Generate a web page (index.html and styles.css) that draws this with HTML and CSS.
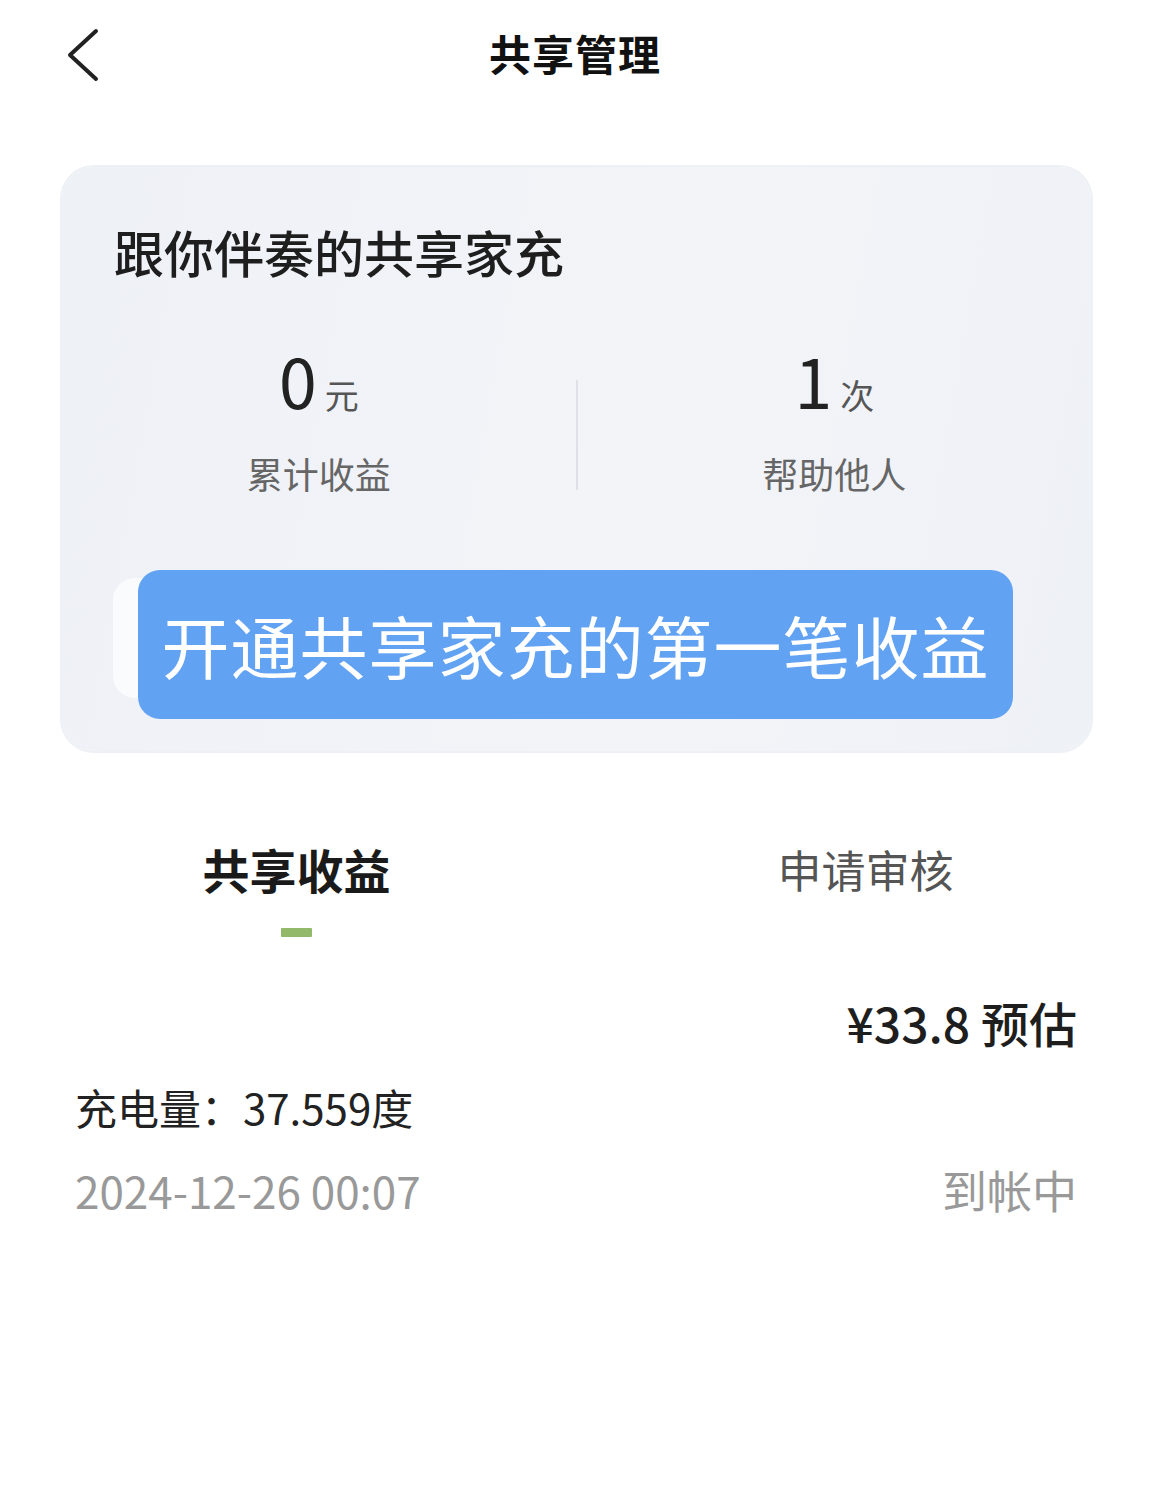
FILE: index.html
```html
<!DOCTYPE html>
<html lang="zh-CN">

<head>
    <meta charset="UTF-8">
    <meta name="viewport" content="width=device-width, initial-scale=1.0">
    <title>共享管理</title>
    <link rel="stylesheet" href="styles.css">
</head>

<body>
    <!-- 顶部导航 -->
    <div class="nav">
        <span class="back">
            <svg width="40" height="56" viewBox="0 0 40 56">
                <polyline points="32,4 6,28 32,52" fill="none" stroke="#222" stroke-width="4" stroke-linecap="round" stroke-linejoin="round" />
            </svg>
        </span>
        <h1 class="nav-title">共享管理</h1>
    </div>

    <!-- 收益卡片 -->
    <div class="card">
        <div class="card-title">跟你伴奏的共享家充</div>
        <div class="stats">
            <div class="stat">
                <div class="stat-value">0<span class="unit">元</span></div>
                <div class="stat-label">累计收益</div>
            </div>
            <div class="divider"></div>
            <div class="stat">
                <div class="stat-value">1<span class="unit">次</span></div>
                <div class="stat-label">帮助他人</div>
            </div>
        </div>
        <div class="action">
            <div class="action-btn"></div>
            <div class="banner">开通共享家充的第一笔收益</div>
        </div>
    </div>

    <!-- 标签 -->
    <div class="tabs">
        <div class="tab active">
            <span class="tab-text">共享收益</span>
            <span class="tab-line"></span>
        </div>
        <div class="tab">
            <span class="tab-text">申请审核</span>
        </div>
    </div>

    <!-- 记录 -->
    <div class="record">
        <div class="record-row">
            <span></span>
            <span class="money">¥33.8 预估</span>
        </div>
        <div class="record-row">
            <span class="power">充电量：37.559度</span>
        </div>
        <div class="record-row">
            <span class="time">2024-12-26 00:07</span>
            <span class="status">到帐中</span>
        </div>
    </div>
</body>

</html>
```

FILE: styles.css
```css
* {
    margin: 0;
    padding: 0;
    box-sizing: border-box;
}

body {
    width: 1150px;
    min-height: 1489px;
    background-color: #fff;
    font-family: "Noto Sans CJK SC", "Noto Sans", sans-serif;
    color: #222;
}

/* 顶部导航 */
.nav {
    position: relative;
    height: 106px;
    display: flex;
    align-items: center;
    justify-content: center;
}

.nav .back {
    position: absolute;
    left: 64px;
    top: 27px;
    width: 40px;
    height: 56px;
}

.nav-title {
    font-size: 42px;
    font-weight: 700;
    line-height: 56px;
    color: #111;
    letter-spacing: 1px;
}

/* 卡片 */
.card {
    width: 1029px;
    margin: 61px 0 0 62px;
    padding: 54px 51px 53px 51px;
    border-radius: 32px;
    background: linear-gradient(100deg, #eef1f6 0%, #f2f4f8 60%, #eef1f6 100%);
    box-shadow: 0 0 0 2px #edf0f4;
}

.card-title {
    padding-left: 1px;
    font-size: 50px;
    line-height: 60px;
    font-weight: 500;
    color: #1e1e1e;
}

.stats {
    display: flex;
    margin: 59px -51px 0 -51px;
}

.stat {
    flex: 1;
    text-align: center;
}

.stat-value {
    font-size: 68px;
    line-height: 80px;
    color: #222;
}

.stat-value .unit {
    margin-left: 8px;
    font-size: 34px;
    color: #555;
}

.stat-label {
    margin-top: 16px;
    font-size: 36px;
    line-height: 44px;
    color: #666;
}

.divider {
    width: 2px;
    height: 110px;
    margin-top: 40px;
    background-color: #dde0e6;
}

/* 按钮 + 浮层 */
.action {
    position: relative;
    margin-top: 83px;
}

/* 被浮层盖住的白色按钮，只露出左边一点 */
.action-btn {
    width: 600px;
    height: 120px;
    border-radius: 22px;
    background-color: #fafbfd;
}

.banner {
    position: absolute;
    left: 25px;
    top: -8px;
    width: 875px;
    height: 149px;
    border-radius: 22px;
    background-color: #62a2f2;
    color: #fff;
    font-size: 68px;
    line-height: 149px;
    text-align: center;
    letter-spacing: 1px;
}

/* 标签 */
.tabs {
    display: flex;
    margin-top: 90px;
    padding-left: 12px;
}

.tab {
    flex: 1;
    display: flex;
    flex-direction: column;
    align-items: center;
}

.tab-text {
    font-size: 44px;
    line-height: 56px;
    color: #555;
}

.tab.active .tab-text {
    font-size: 47px;
    font-weight: 700;
    color: #1a1a1a;
}

.tab-line {
    width: 31px;
    height: 9px;
    margin-top: 31px;
    border-radius: 1px;
    background-color: #92b96a;
}

/* 记录 */
.record {
    margin-top: 57px;
    padding: 0 73px 0 75px;
}

.record-row {
    display: flex;
    justify-content: space-between;
    align-items: center;
    margin-top: 32px;
}

.record-row:first-child {
    margin-top: 0;
}

.money {
    font-size: 48px;
    line-height: 56px;
    font-weight: 500;
    color: #1e1e1e;
}

.power {
    font-size: 42px;
    line-height: 50px;
    color: #222;
}

.time {
    font-size: 44px;
    line-height: 52px;
    color: #999;
}

.status {
    font-size: 45px;
    line-height: 52px;
    color: #999;
}
```
